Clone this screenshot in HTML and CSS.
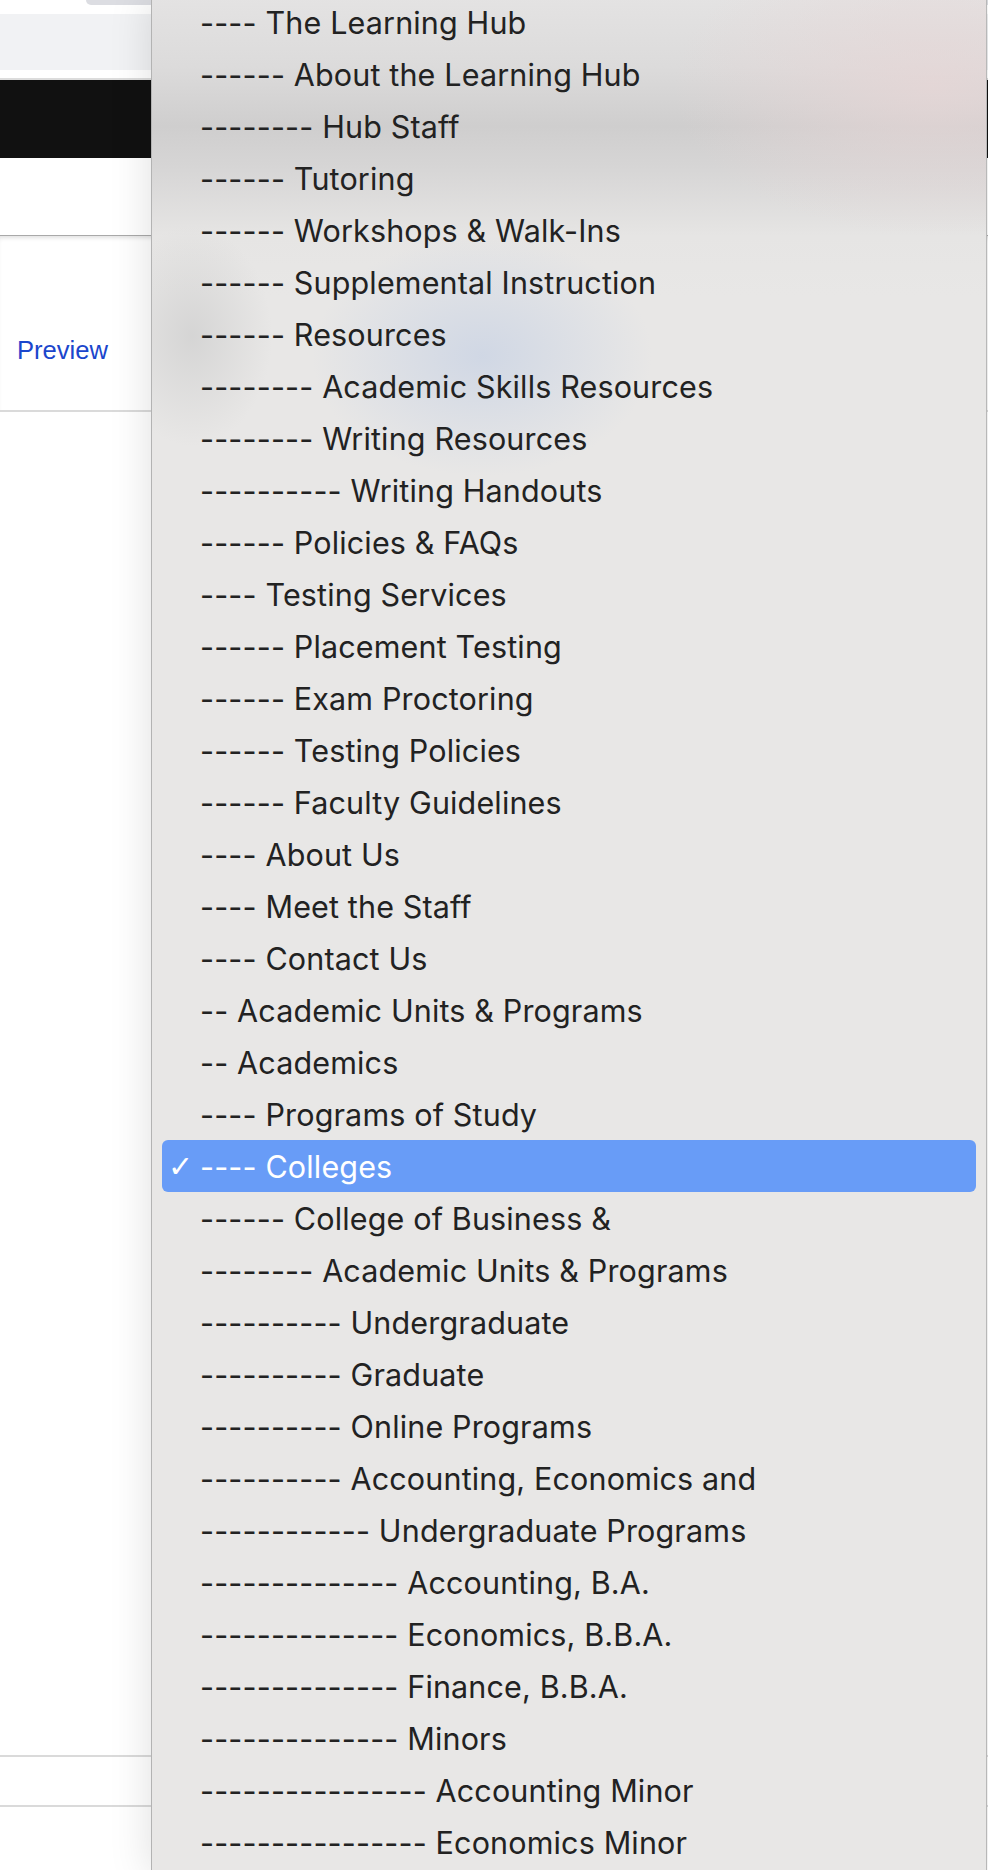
FILE: index.html
```html
<!DOCTYPE html>
<html lang="en">
<head>
	<meta charset="UTF-8">
	<title>Parent page</title>
	<link rel="stylesheet" href="styles.css">
</head>
<body>
	<div class="page">
		<div class="page-top"><div class="search"></div></div>
		<div class="page-toolbar"></div>
		<div class="page-gap"></div>
		<div class="page-black"></div>
		<div class="page-tabs"></div>
		<div class="page-preview"><a href="#">Preview</a></div>
		<div class="page-body"></div>
		<div class="page-row"></div>
		<div class="page-row"></div>
		<div class="page-rest"></div>
	</div>

	<div class="menu">
		<div class="item">---- The Learning Hub</div>
		<div class="item">------ About the Learning Hub</div>
		<div class="item">-------- Hub Staff</div>
		<div class="item">------ Tutoring</div>
		<div class="item">------ Workshops &amp; Walk-Ins</div>
		<div class="item">------ Supplemental Instruction</div>
		<div class="item">------ Resources</div>
		<div class="item">-------- Academic Skills Resources</div>
		<div class="item">-------- Writing Resources</div>
		<div class="item">---------- Writing Handouts</div>
		<div class="item">------ Policies &amp; FAQs</div>
		<div class="item">---- Testing Services</div>
		<div class="item">------ Placement Testing</div>
		<div class="item">------ Exam Proctoring</div>
		<div class="item">------ Testing Policies</div>
		<div class="item">------ Faculty Guidelines</div>
		<div class="item">---- About Us</div>
		<div class="item">---- Meet the Staff</div>
		<div class="item">---- Contact Us</div>
		<div class="item">-- Academic Units &amp; Programs</div>
		<div class="item">-- Academics</div>
		<div class="item">---- Programs of Study</div>
		<div class="item selected"><span class="check">✓</span>---- Colleges</div>
		<div class="item">------ College of Business &amp;</div>
		<div class="item">-------- Academic Units &amp; Programs</div>
		<div class="item">---------- Undergraduate</div>
		<div class="item">---------- Graduate</div>
		<div class="item">---------- Online Programs</div>
		<div class="item">---------- Accounting, Economics and</div>
		<div class="item">------------ Undergraduate Programs</div>
		<div class="item">-------------- Accounting, B.A.</div>
		<div class="item">-------------- Economics, B.B.A.</div>
		<div class="item">-------------- Finance, B.B.A.</div>
		<div class="item">-------------- Minors</div>
		<div class="item">---------------- Accounting Minor</div>
		<div class="item">---------------- Economics Minor</div>
	</div>
</body>
</html>
```

FILE: styles.css
```css
html, body {
	margin: 0;
	height: 1870px;
	overflow: hidden;
	background: #fff;
}

/* page behind the popup */
.page {
	display: flex;
	flex-direction: column;
	height: 1870px;
	font-family: "Liberation Sans", Arial, sans-serif;
}
.page-top {
	height: 14px;
}
.page-top .search {
	margin-left: 86px;
	height: 5px;
	background: #dcdde2;
	border-bottom-left-radius: 8px;
}
.page-toolbar {
	height: 56px;
	background: #f1f2f4;
}
.page-gap {
	height: 8px;
	border-bottom: 2px solid #dcdcdc;
}
.page-black {
	height: 78px;
	background: #111;
}
.page-tabs {
	height: 77px;
}
.page-preview {
	box-sizing: border-box;
	height: 177px;
	padding: 100px 0 0 17px;
	border-top: 1px solid #a9a9a9;
	border-bottom: 2px solid #dadada;
	box-shadow: inset 0 4px 4px -2px rgba(0, 0, 0, 0.12);
}
.page-preview a {
	color: #1b46cc;
	text-decoration: none;
	font-size: 25.6px;
}
.page-body {
	height: 1343px;
}
.page-row {
	height: 48px;
	border-top: 2px solid #dadada;
}
.page-rest {
	flex: 1;
}

/* the open select list */
.menu {
	position: absolute;
	top: -4px;
	left: 151px;
	width: 834px;
	height: 1880px;
	border-left: 1px solid #b3b3b3;
	border-right: 1px solid #b8b8b8;
	box-shadow: 0 0 40px rgba(0, 0, 0, 0.13);
	font-family: Inter, "Noto Sans", sans-serif;
	font-size: 30.5px;
	font-variant-ligatures: none;
	font-feature-settings: "calt" 0;
	letter-spacing: 0.15px;
	color: #222;
	background:
		radial-gradient(ellipse 170px 120px at 330px 360px, rgba(200, 210, 228, 0.75), rgba(200, 210, 228, 0) 100%),
		radial-gradient(ellipse 80px 110px at 40px 340px, rgba(205, 205, 205, 0.7), rgba(205, 205, 205, 0) 100%),
		radial-gradient(ellipse 260px 150px at 780px 90px, rgba(232, 214, 214, 0.7), rgba(232, 214, 214, 0) 100%),
		linear-gradient(to bottom, #e4e3e3 0px, #dcdbdb 70px, #cfcece 130px, #d6d5d5 170px, #e6e5e4 240px, #e8e7e6 300px);
}
.item {
	height: 52px;
	margin: 0 10px;
	padding-left: 38px;
	display: flex;
	align-items: center;
	border-radius: 6px;
	white-space: pre;
}
.item.selected {
	background: #689cf7;
	color: #fff;
}
.check {
	width: 32px;
	margin-left: -32px;
	padding-left: 0;
	font-family: "DejaVu Sans", sans-serif;
	font-weight: bold;
	font-size: 30px;
}
```
